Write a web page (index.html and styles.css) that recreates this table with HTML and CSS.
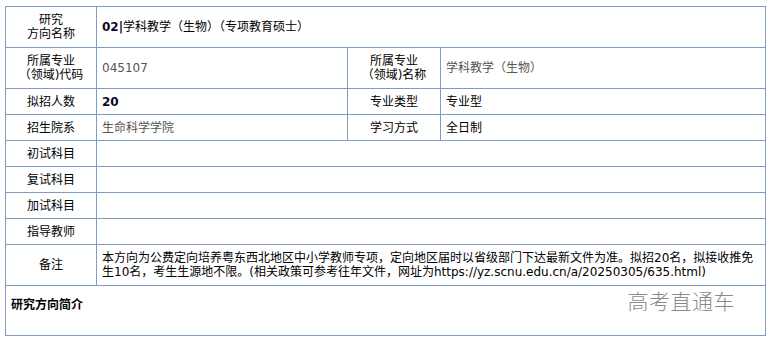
FILE: index.html
```html
<!DOCTYPE html>
<html lang="zh-CN">
<head>
<meta charset="utf-8">
<title>研究方向</title>
<link rel="stylesheet" href="styles.css">
</head>
<body>
<table class="info">
  <colgroup>
    <col class="c1"><col class="c2"><col class="c3"><col class="c4">
  </colgroup>
  <tr class="tall">
    <td class="label">研究<br>方向名称</td>
    <td class="value dark" colspan="3"><b class="num">02|</b>学科教学（生物）（专项教育硕士）</td>
  </tr>
  <tr class="tall">
    <td class="label">所属专业<br>（领域)代码</td>
    <td class="value gray">045107</td>
    <td class="label">所属专业<br>（领域)名称</td>
    <td class="value gray">学科教学（生物）</td>
  </tr>
  <tr class="short">
    <td class="label">拟招人数</td>
    <td class="value dark"><b class="num">20</b></td>
    <td class="label">专业类型</td>
    <td class="value dark">专业型</td>
  </tr>
  <tr class="short">
    <td class="label">招生院系</td>
    <td class="value gray">生命科学学院</td>
    <td class="label">学习方式</td>
    <td class="value dark">全日制</td>
  </tr>
  <tr class="short">
    <td class="label">初试科目</td>
    <td class="value" colspan="3"></td>
  </tr>
  <tr class="short">
    <td class="label">复试科目</td>
    <td class="value" colspan="3"></td>
  </tr>
  <tr class="short">
    <td class="label">加试科目</td>
    <td class="value" colspan="3"></td>
  </tr>
  <tr class="short">
    <td class="label">指导教师</td>
    <td class="value" colspan="3"></td>
  </tr>
  <tr class="tall">
    <td class="label">备注</td>
    <td class="value dark" colspan="3">本方向为公费定向培养粤东西北地区中小学教师专项，定向地区届时以省级部门下达最新文件为准。拟招20名，拟接收推免生10名，考生生源地不限。(相关政策可参考往年文件，网址为https://yz.scnu.edu.cn/a/20250305/635.html)</td>
  </tr>
  <tr class="intro">
    <td class="intro-cell" colspan="4">
      <div class="intro-box">
        <strong class="intro-title">研究方向简介</strong>
        <span class="watermark">高考直通车</span>
      </div>
    </td>
  </tr>
</table>
</body>
</html>
```

FILE: styles.css
```css
html, body {
  background: #ffffff;
}

body {
  margin: 6px 0 0 5px;
  font-family: "DejaVu Sans", "Noto Sans CJK SC", sans-serif;
  font-size: 12px;
  line-height: 14px;
  color: #000;
}

.info {
  border-collapse: collapse;
  table-layout: fixed;
  width: 760px;
}

.c1 { width: 91px; }
.c2 { width: 251px; }
.c3 { width: 93px; }
.c4 { width: 325px; }

.info td {
  border: 1px solid #7f9dc2;
  padding: 0 5px;
  vertical-align: middle;
}

.tall { height: 41px; }
.short { height: 26px; }
.intro { height: 50px; }

.label {
  text-align: center;
  color: #000;
}

.value {
  text-align: left;
}

.gray { color: #555555; }
.dark { color: #000000; }

.num {
  font-weight: bold;
  color: #0a0a2a;
}

.intro-cell {
  vertical-align: top !important;
  padding: 0 !important;
}

.intro-box {
  position: relative;
  height: 49px;
  padding: 12px 5px 0;
  box-sizing: border-box;
}

.intro-title {
  font-weight: bold;
  color: #000;
}

.watermark {
  position: absolute;
  right: 30px;
  top: 1px;
  font-size: 21px;
  line-height: 26px;
  letter-spacing: 0.5px;
  color: #8a8a8a;
  font-family: "Noto Sans CJK SC", sans-serif;
  font-weight: 300;
}
```
